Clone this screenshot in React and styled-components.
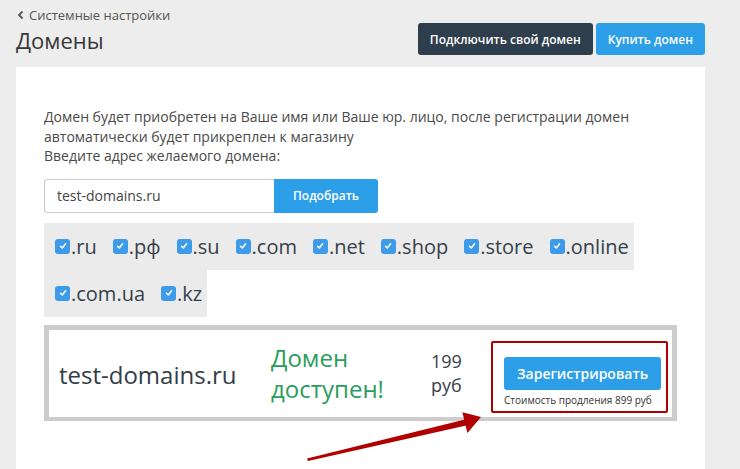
import React from 'react';
import styled, { createGlobalStyle } from 'styled-components';

const GlobalStyle = createGlobalStyle`
  body {
    margin: 0;
    background: #ededed;
    font-family: 'Open Sans', 'Liberation Sans', sans-serif;
    overflow: hidden;
  }
`;

const Page = styled.div`
  width: 740px;
  height: 469px;
  overflow: hidden;
`;

const Header = styled.header`
  display: flex;
  justify-content: space-between;
  height: 67px;
  padding: 6px 35px 0 16px;
  box-sizing: border-box;
`;

const TitleCol = styled.div`
  display: flex;
  flex-direction: column;
`;

const Crumb = styled.a`
  display: flex;
  align-items: center;
  gap: 5px;
  font-size: 13px;
  line-height: 18px;
  color: #555;
  padding-left: 1px;
`;

const Title = styled.h1`
  margin: 0;
  font-size: 22px;
  font-weight: 400;
  line-height: 32px;
  color: #383838;
`;

const Actions = styled.div`
  display: flex;
  gap: 3px;
  padding-top: 17px;
`;

const Button = styled.button`
  height: ${p => p.height || 32}px;
  padding: 0 12px;
  border: none;
  border-radius: ${p => p.radius || '3px'};
  background: ${p => p.dark ? '#2f3e4d' : '#2d9ee8'};
  color: #fff;
  font-family: inherit;
  font-size: ${p => p.size || 12}px;
  font-weight: 600;
  white-space: nowrap;
  cursor: pointer;
`;

const Panel = styled.section`
  position: relative;
  margin: 0 35px 0 16px;
  min-height: 420px;
  background: #fff;
  padding: 40px 28px 0;
  box-sizing: border-box;
`;

const Intro = styled.p`
  margin: 0;
  font-size: 14px;
  line-height: 19.5px;
  color: #4a4a4a;
`;

const SearchRow = styled.div`
  display: flex;
  margin-top: 13px;
`;

const Input = styled.input`
  width: 230px;
  height: 34px;
  box-sizing: border-box;
  border: 1px solid #ccc;
  border-right: none;
  border-radius: 3px 0 0 3px;
  padding: 0 12px;
  font-family: inherit;
  font-size: 14px;
  color: #444;
  outline: none;
`;

const Zones = styled.div`
  display: flex;
  flex-wrap: wrap;
  width: 620px;
  margin-top: 10px;
`;

const Zone = styled.label`
  display: flex;
  align-items: center;
  height: 47px;
  padding: 0 5px 0 11px;
  background: #ebebeb;
  font-size: 20px;
  color: #36404a;
`;

const Box = styled.span`
  width: 15px;
  height: 15px;
  margin-right: 1px;
  border-radius: 3px;
  background: #3d9be9;
  display: flex;
  align-items: center;
  justify-content: center;
`;

const Result = styled.div`
  display: grid;
  grid-template-columns: 212px 160px 60px 1fr;
  align-items: center;
  width: 633px;
  height: 96px;
  margin-top: 8px;
  border: 5px solid #cccccc;
  border-bottom-width: 4px;
  box-sizing: border-box;
  padding: 0 4px 0 10px;
`;

const DomainName = styled.div`
  font-size: 24px;
  color: #333d47;
  padding-top: 2px;
`;

const Status = styled.div`
  font-size: 24px;
  line-height: 31px;
  color: #2a9d5c;
`;

const Price = styled.div`
  font-size: 18px;
  line-height: 24px;
  color: #36404a;
`;

const Highlight = styled.div`
  margin-top: 7px;
  border: 2px solid #b10000;
  border-radius: 2px;
  padding: 14px 5px 5px 11px;
  height: 72px;
  box-sizing: border-box;
`;

const Note = styled.div`
  margin-top: 3px;
  font-size: 10px;
  line-height: 14px;
  color: #333;
  white-space: nowrap;
`;

const Arrow = styled.svg`
  position: absolute;
  left: 0;
  top: 0;
  pointer-events: none;
`;

const zones = ['.ru', '.рф', '.su', '.com', '.net', '.shop', '.store', '.online', '.com.ua', '.kz'];

const Check = () => (
  <Box>
    <svg width="8" height="8" viewBox="0 0 8 8">
      <path d="M1.5 4.2 L3.3 6 L6.6 1.8" fill="none" stroke="#fff" strokeWidth="1.5" strokeLinecap="round" strokeLinejoin="round" />
    </svg>
  </Box>
);

export default function App() {
  return (
    <Page>
      <GlobalStyle />
      <Header>
        <TitleCol>
          <Crumb>
            <svg width="7" height="10" viewBox="0 0 7 10">
              <path d="M5.5 1.5 L2 5 L5.5 8.5" fill="none" stroke="#555" strokeWidth="1.8" />
            </svg>
            Системные настройки
          </Crumb>
          <Title>Домены</Title>
        </TitleCol>
        <Actions>
          <Button dark>Подключить свой домен</Button>
          <Button>Купить домен</Button>
        </Actions>
      </Header>
      <Panel>
        <Intro>
          Домен будет приобретен на Ваше имя или Ваше юр. лицо, после регистрации домен<br />
          автоматически будет прикреплен к магазину<br />
          Введите адрес желаемого домена:
        </Intro>
        <SearchRow>
          <Input defaultValue="test-domains.ru" />
          <Button height={34} radius="0 3px 3px 0" style={{ width: 104 }}>Подобрать</Button>
        </SearchRow>
        <Zones>
          {zones.map((z, i) => (
            <React.Fragment key={z}>
              <Zone><Check />{z}</Zone>
              {i === 7 && <div style={{ flexBasis: '100%' }} />}
            </React.Fragment>
          ))}
        </Zones>
        <Result>
          <DomainName>test-domains.ru</DomainName>
          <Status>Домен<br />доступен!</Status>
          <Price>199<br />руб</Price>
          <Highlight>
            <Button height={33} size={14} style={{ width: 157 }}>Зарегистрировать</Button>
            <Note>Стоимость продления 899 руб</Note>
          </Highlight>
        </Result>
        <Arrow width="689" height="402" viewBox="0 0 689 402">
          <polygon points="291,391.5 451,352 452.5,358 292,394" fill="#b10000" />
          <polygon points="465,350 446.4,345.2 451.4,366" fill="#b10000" />
        </Arrow>
      </Panel>
    </Page>
  );
}
